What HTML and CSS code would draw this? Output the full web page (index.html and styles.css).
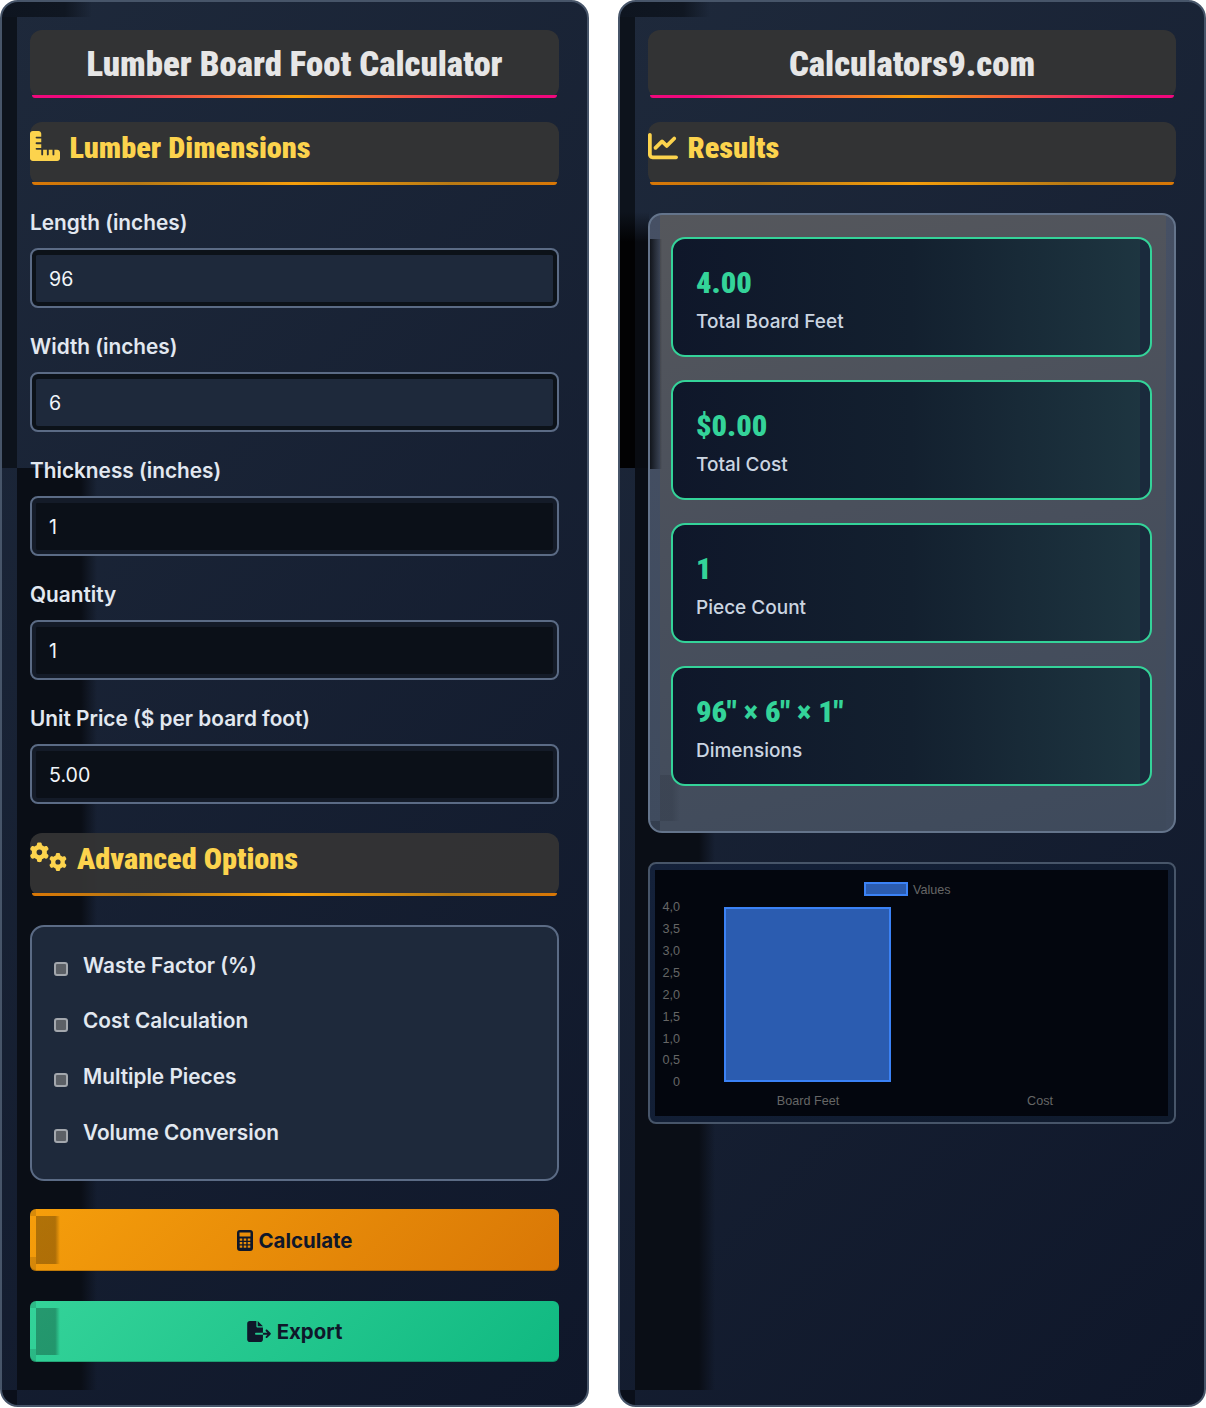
FILE: index.html
```html
<!DOCTYPE html>
<html lang="en">
<head>
<meta charset="utf-8">
<title>Lumber Board Foot Calculator</title>
<link rel="stylesheet" href="styles.css">
</head>
<body>
<svg class="defs" width="0" height="0" aria-hidden="true">
  <defs>
    <path id="gear" d="M308.5 135.3c7.1-6.3 9.9-16.2 6.2-25c-2.3-5.3-4.8-10.5-7.6-15.5L304 89.4c-3-5-6.3-9.9-9.8-14.6c-5.7-7.6-15.7-10.1-24.7-7.1l-28.2 9.3c-10.7-8.8-23-16-36.2-20.9L199 27.1c-1.9-9.3-9.1-16.7-18.5-17.8C173.9 8.4 167.2 8 160.4 8h-.7c-6.8 0-13.5 .4-20.1 1.2c-9.4 1.1-16.6 8.6-18.5 17.8L115 56.1c-13.3 5-25.5 12.1-36.2 20.9L50.5 67.8c-9-3-19-.5-24.7 7.1c-3.5 4.7-6.8 9.6-9.9 14.6l-3 5.3c-2.8 5-5.3 10.2-7.6 15.6c-3.7 8.7-.9 18.6 6.2 25l22.2 19.8C32.6 161.9 32 168.9 32 176s.6 14.1 1.7 20.9L11.5 216.7c-7.1 6.3-9.9 16.2-6.2 25c2.3 5.3 4.8 10.5 7.6 15.6l3 5.2c3 5.1 6.3 9.9 9.9 14.6c5.7 7.6 15.7 10.1 24.7 7.1l28.2-9.3c10.7 8.8 23 16 36.2 20.9l6.1 29.1c1.9 9.3 9.1 16.7 18.5 17.8c6.7 .8 13.5 1.2 20.4 1.2s13.7-.4 20.4-1.2c9.4-1.1 16.6-8.6 18.5-17.8l6.1-29.1c13.3-5 25.5-12.1 36.2-20.9l28.2 9.3c9 3 19 .5 24.7-7.1c3.5-4.7 6.8-9.5 9.8-14.6l3.1-5.4c2.8-5 5.3-10.2 7.6-15.5c3.7-8.7 .9-18.6-6.2-25l-22.2-19.8c1.1-6.8 1.7-13.8 1.7-20.9s-.6-14.1-1.7-20.9l22.2-19.8zM112 176a48 48 0 1 1 96 0 48 48 0 1 1 -96 0z"/>
  </defs>
</svg>
<main class="layout">
  <section class="panel panel-left">
    <h1 class="title">Lumber Board Foot Calculator</h1>
    <h2 class="section">
      <svg class="icon icon-ruler" viewBox="0 0 512 512"><path d="M.2 468.9C2.7 493.1 23.1 512 48 512l96 0 320 0c26.5 0 48-21.5 48-48l0-96c0-26.5-21.5-48-48-48l-48 0 0 80c0 8.8-7.2 16-16 16s-16-7.2-16-16l0-80-64 0 0 80c0 8.8-7.2 16-16 16s-16-7.2-16-16l0-80-64 0 0 80c0 8.8-7.2 16-16 16s-16-7.2-16-16l0-80-80 0c-8.8 0-16-7.2-16-16s7.2-16 16-16l80 0 0-64-80 0c-8.8 0-16-7.2-16-16s7.2-16 16-16l80 0 0-64-80 0c-8.8 0-16-7.2-16-16s7.2-16 16-16l80 0 0-48c0-26.5-21.5-48-48-48L48 0C21.5 0 0 21.5 0 48L0 368l0 96c0 1.7 .1 3.3 .2 4.9z"/></svg>
      <span>Lumber Dimensions</span>
    </h2>
    <div class="field"><label class="label" for="len">Length (inches)</label><input id="len" class="input" value="96"></div>
    <div class="field"><label class="label" for="wid">Width (inches)</label><input id="wid" class="input" value="6"></div>
    <div class="field"><label class="label" for="thi">Thickness (inches)</label><input id="thi" class="input input-dark" value="1"></div>
    <div class="field"><label class="label" for="qty">Quantity</label><input id="qty" class="input input-dark" value="1"></div>
    <div class="field"><label class="label" for="prc">Unit Price ($ per board foot)</label><input id="prc" class="input input-dark" value="5.00"></div>
    <h2 class="section section-adv">
      <svg class="icon icon-gears" viewBox="0 0 640 512"><use href="#gear"/><use href="#gear" transform="translate(330 180) scale(.92)"/></svg>
      <span>Advanced Options</span>
    </h2>
    <div class="options">
      <label class="option"><input type="checkbox" class="check"><span>Waste Factor (%)</span></label>
      <label class="option"><input type="checkbox" class="check"><span>Cost Calculation</span></label>
      <label class="option"><input type="checkbox" class="check"><span>Multiple Pieces</span></label>
      <label class="option"><input type="checkbox" class="check"><span>Volume Conversion</span></label>
    </div>
    <button class="btn btn-orange">
      <svg class="btn-icon btn-icon-calc" viewBox="0 0 16 21"><path fill-rule="evenodd" d="M3 0h10a3 3 0 0 1 3 3v15a3 3 0 0 1-3 3H3a3 3 0 0 1-3-3V3a3 3 0 0 1 3-3zM2.500 2.500v4h11v-4zM2.700 8.500v2.200h2.600v-2.200zM6.700 8.500v2.200h2.600v-2.200zM10.700 8.500v2.200h2.600v-2.200zM2.700 12v2.200h2.600v-2.200zM6.700 12v2.200h2.600v-2.200zM10.700 12v2.200h2.600v-2.200zM2.700 15.500v2.200h2.600v-2.200zM6.700 15.500v2.200h2.600v-2.200zM10.700 15.500v2.200h2.600v-2.200z"/></svg>
      <span>Calculate</span>
    </button>
    <button class="btn btn-green">
      <svg class="btn-icon btn-icon-export" viewBox="0 0 576 512"><path d="M0 64C0 28.700 28.700 0 64 0H224V128c0 17.700 14.300 32 32 32H384V288H216c-13.300 0-24 10.700-24 24s10.700 24 24 24H384V448c0 35.300-28.700 64-64 64H64c-35.300 0-64-28.700-64-64V64zM384 336V288H494.100l-39-39c-9.400-9.400-9.400-24.600 0-33.900s24.600-9.400 33.900 0l80 80c9.400 9.400 9.400 24.600 0 33.900l-80 80c-9.400 9.400-24.600 9.400-33.900 0s-9.400-24.600 0-33.900l39-39H384zm0-208H256V0L384 128z"/></svg>
      <span>Export</span>
    </button>
  </section>

  <section class="panel panel-right">
    <h1 class="title">Calculators9.com</h1>
    <h2 class="section section-results">
      <svg class="icon icon-chart" viewBox="0 0 512 512"><path d="M64 64c0-17.700-14.300-32-32-32S0 46.300 0 64V400c0 44.200 35.800 80 80 80H480c17.700 0 32-14.300 32-32s-14.300-32-32-32H80c-8.800 0-16-7.200-16-16V64zm406.600 86.600c12.500-12.500 12.500-32.800 0-45.300s-32.800-12.500-45.300 0L320 210.700l-57.400-57.400c-12.500-12.500-32.800-12.500-45.300 0l-112 112c-12.500 12.500-12.500 32.800 0 45.300s32.800 12.500 45.300 0L240 221.300l57.400 57.400c12.500 12.500 32.800 12.500 45.300 0l128-128z"/></svg>
      <span>Results</span>
    </h2>
    <div class="results">
      <div class="card"><div class="value">4.00</div><div class="caption">Total Board Feet</div></div>
      <div class="card"><div class="value">$0.00</div><div class="caption">Total Cost</div></div>
      <div class="card"><div class="value">1</div><div class="caption">Piece Count</div></div>
      <div class="card"><div class="value">96" × 6" × 1"</div><div class="caption">Dimensions</div></div>
    </div>
    <div class="chart">
      <svg class="chart-svg" viewBox="0 1 513 246" width="513" height="246">
        <rect class="bar" x="70" y="39" width="165" height="173"/>
        <rect class="bar" x="210" y="14" width="42" height="12"/>
        <text class="t" x="258" y="25">Values</text>
        <g class="t ty">
          <text x="25" y="42">4,0</text><text x="25" y="64">3,5</text><text x="25" y="86">3,0</text>
          <text x="25" y="108">2,5</text><text x="25" y="130">2,0</text><text x="25" y="152">1,5</text>
          <text x="25" y="174">1,0</text><text x="25" y="195">0,5</text><text x="25" y="217">0</text>
        </g>
        <text class="t tx" x="153" y="236">Board Feet</text>
        <text class="t tx" x="385" y="236">Cost</text>
      </svg>
    </div>
  </section>
</main>
</body>
</html>
```
FILE: styles.css
```css
* { box-sizing: border-box; }
html, body { margin: 0; padding: 0; background: #fff; }
body { font-family: "Inter", "Liberation Sans", sans-serif; }
.defs { position: absolute; }

.layout {
  display: grid;
  grid-template-columns: 589px 588px;
  column-gap: 29px;
}

.panel {
  min-height: 1407px;
  border: 2px solid #475569;
  border-radius: 18px;
  padding: 28px;
  --base: linear-gradient(135deg, #1e293b, #0f172a);
  --top: linear-gradient(90deg, #0e1520 0, #101722 70%, transparent 100%) 0 0 / 90px 15px no-repeat;
  --strip: linear-gradient(#0d131c, #0d131c) 0 15px / 15px 451px no-repeat;
  --corner: linear-gradient(#0a0f1a, #0a0f1a) 0 1388px / 15px 20px no-repeat;
  --col: linear-gradient(90deg, #0a0e16 0, #0a0e16 80%, transparent 100%) 15px 466px / 80px 922px no-repeat;
}
.panel-left { background: var(--top), var(--strip), var(--corner), var(--col), var(--base); }
.panel-right {
  background:
    var(--top),
    linear-gradient(#0d131c 0, #020203 30px) 0 210px / 15px 256px no-repeat,
    linear-gradient(transparent 0, #090c12 30px) 15px 210px / 14px 256px no-repeat,
    var(--strip), var(--corner), var(--col), var(--base);
}

.title, .section {
  position: relative;
  margin: 0;
  border-radius: 12px;
  background: rgba(52, 52, 52, .94);
  font-family: "Roboto", sans-serif;
  font-stretch: 75%;
  font-weight: 900;
}
.title {
  height: 68px;
  margin-bottom: 24px;
  color: #e6e6e6;
  font-size: 34.800px;
  line-height: 68px;
  text-align: center;
}
.title::after, .section::after {
  content: "";
  position: absolute;
  left: 2px;
  right: 2px;
  bottom: 0;
  height: 3px;
  border-radius: 0 0 8px 8px;
}
.title::after { background: linear-gradient(90deg, #f0087c 0, #f0087c 8%, #f59e0b 50%, #f0087c 92%, #f0087c 100%); }
.section::after { background: linear-gradient(90deg, #d97706 0, #b87a14 20%, #f59e0b 50%, #b87a14 80%, #d97706 100%); }

.section {
  display: flex;
  align-items: center;
  gap: 9.500px;
  height: 63px;
  margin-bottom: 24px;
  padding-bottom: 13px;
  color: #fcd34d;
  font-size: 30.300px;
}
.section-adv { margin-top: 29px; margin-bottom: 29px; }
.section-results { margin-bottom: 28px; }
.icon { height: 30px; margin-top: -2px; fill: #fcd34d; flex: none; }
.icon-ruler { width: 30px; }
.icon-gears { width: 37.500px; }
.icon-chart { width: 30px; }

.field { margin-bottom: 25px; }
.field:nth-of-type(5) { margin-bottom: 0; }
.label {
  display: block;
  height: 27px;
  margin-bottom: 12px;
  color: #e2e8f0;
  font-size: 20.800px;
  font-weight: 600;
  line-height: 27px;
}
.input {
  display: block;
  width: 100%;
  height: 60px;
  padding: 2px 17px 0;
  border: 2px solid #5b6b85;
  border-radius: 8px;
  outline: 0;
  background: #1e293b;
  box-shadow: inset 0 0 0 4px #0c1219, inset 0 5px 0 #0c1219;
  color: #f1f5f9;
  font-family: inherit;
  font-size: 19.600px;
}
.input-dark {
  background: #0b1018;
  box-shadow: inset 0 0 0 4px #141b28, inset 0 5px 0 #141b28;
}

.options {
  height: 256px;
  margin-bottom: 28px;
  padding: 10.500px 22px;
  border: 2px solid #5b6b85;
  border-radius: 14px;
  background: #1e293b;
}
.option {
  display: flex;
  align-items: center;
  gap: 15px;
  height: 55.600px;
  color: #e2e8f0;
  font-size: 20.800px;
  font-weight: 600;
}
.check {
  appearance: none;
  width: 14px;
  height: 14px;
  margin: 8px 0 0;
  border: 2px solid #a3a7ad;
  border-radius: 3px;
  background: #5c6066;
}

.btn {
  position: relative;
  display: flex;
  align-items: center;
  justify-content: center;
  gap: 6px;
  width: 100%;
  height: 62px;
  margin-bottom: 30px;
  padding: 0;
  border: 0;
  border-radius: 6px;
  box-shadow: inset 0 -1px 0 rgba(0, 0, 0, .2);
  color: #0f172a;
  font-family: inherit;
  font-size: 20.400px;
  font-weight: 700;
}
.btn::before {
  content: "";
  position: absolute;
  left: 6px;
  top: 7px;
  bottom: 7px;
  width: 24px;
  background: linear-gradient(90deg, rgba(0, 0, 0, .28) 0, rgba(0, 0, 0, .28) 80%, transparent);
}
.btn::after {
  content: "";
  position: absolute;
  left: 0;
  top: 0;
  bottom: 0;
  width: 6px;
  border-radius: 6px 0 0 6px;
  background: linear-gradient(rgba(0, 0, 0, .12) 7px, transparent 7px, transparent 48px, rgba(0, 0, 0, .12) 48px);
}
.btn-orange { background: linear-gradient(135deg, #f59e0b, #d97706); }
.btn-green { background: linear-gradient(135deg, #34d399, #10b981); margin-bottom: 0; height: 61px; }
.btn-icon { fill: #0f172a; height: 21px; flex: none; }
.btn-icon-calc { width: 16px; }
.btn-icon-export { width: 24px; }

.results {
  height: 620px;
  margin-bottom: 29px;
  padding: 22px 22px 22px 21px;
  border: 2px solid #64748b;
  border-radius: 14px;
  background:
    linear-gradient(90deg, rgba(5, 7, 10, .8), rgba(5, 7, 10, .1) 11px, transparent 12px) 0 24px / 12px 230px no-repeat,
    linear-gradient(rgba(20, 25, 35, .25), rgba(20, 25, 35, .25)) 0 606px / 10px 10px no-repeat,
    linear-gradient(90deg, rgba(20, 25, 35, .15) 0, rgba(20, 25, 35, .15) 60%, transparent) 10px 560px / 20px 46px no-repeat,
    linear-gradient(165deg, #55575c 0, #4a505c 45%, #3e4a5c 100%) 10px 0 / 506px 616px no-repeat,
    linear-gradient(#465064, #3f4b5e);
}
.card {
  height: 120px;
  margin-bottom: 23px;
  padding: 25px 23px;
  border: 2px solid #34d399;
  border-radius: 14px;
  background:
    linear-gradient(90deg, transparent, transparent 467px, #1a2a3c 467px) 0 0 no-repeat,
    linear-gradient(90deg, #0f172a 0, #13202f 50%, #1e3641 100%);
}
.value {
  color: #34d399;
  font-family: "Roboto", sans-serif;
  font-stretch: 75%;
  font-size: 30.400px;
  font-weight: 900;
  line-height: 38px;
}
.caption {
  margin-top: 8px;
  color: #cbd5e1;
  font-size: 19px;
  font-weight: 500;
  line-height: 24px;
}

.chart {
  height: 262px;
  padding: 6px 5px;
  border: 2px solid #475569;
  border-radius: 8px;
  background: linear-gradient(135deg, #14213a, #0f1a2c);
}
.chart-svg { display: block; background: #03060e; }
.bar { fill: #2b5cb0; stroke: #3b82f6; stroke-width: 2; }
.t { fill: #666; font-family: "Liberation Sans", sans-serif; font-size: 12.600px; }
.ty { text-anchor: end; }
.tx { text-anchor: middle; }
```
